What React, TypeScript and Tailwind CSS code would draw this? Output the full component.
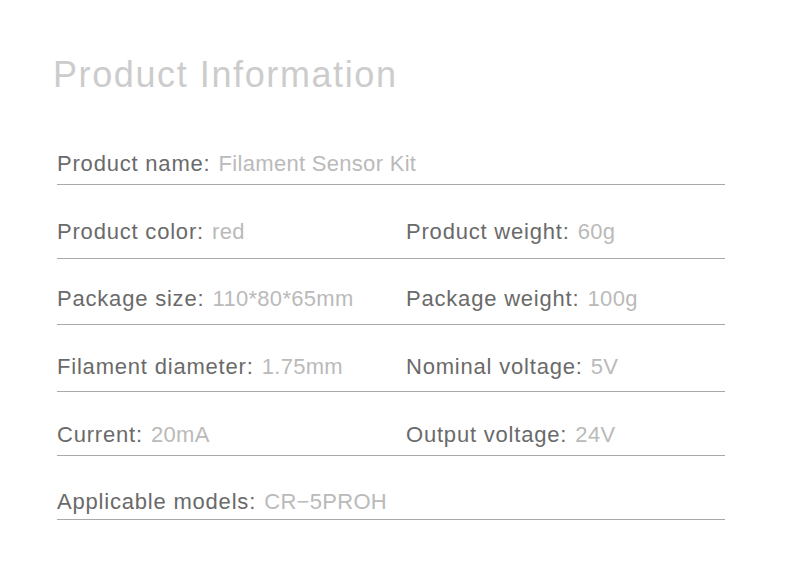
const rows: { pad: string; cells: [string, string][] }[] = [
  { pad: "pt-[59px] pb-[8px]", cells: [["Product name:", "Filament Sensor Kit"]] },
  {
    pad: "pt-[35px] pb-[14px]",
    cells: [
      ["Product color:", "red"],
      ["Product weight:", "60g"],
    ],
  },
  {
    pad: "pt-[28px] pb-[13px]",
    cells: [
      ["Package size:", "110*80*65mm"],
      ["Package weight:", "100g"],
    ],
  },
  {
    pad: "pt-[30px] pb-[12px]",
    cells: [
      ["Filament diameter:", "1.75mm"],
      ["Nominal voltage:", "5V"],
    ],
  },
  {
    pad: "pt-[31px] pb-[8px]",
    cells: [
      ["Current:", "20mA"],
      ["Output voltage:", "24V"],
    ],
  },
  { pad: "pt-[34px] pb-[5px]", cells: [["Applicable models:", "CR−5PROH"]] },
];

function Cell({ label, value }: { label: string; value: string }) {
  return (
    <div className="whitespace-nowrap text-[22px] leading-[24px]">
      <span className="tracking-[0.8px] text-[#6a6a6a]">{label}</span>{" "}
      <span className="ml-[2px] tracking-[0.3px] text-[#bababa]">{value}</span>
    </div>
  );
}

export default function App() {
  return (
    <div
      className="min-h-[588px] w-[790px] bg-white pl-[53px] pt-[57px]"
      style={{ fontFamily: '"Liberation Sans", Arial, sans-serif' }}
    >
      <h1 className="text-[36px] leading-[36px] tracking-[1.6px] text-[#cccccc]">
        Product Information
      </h1>
      <div className="ml-[4px] w-[668px]">
        {rows.map((row, i) => (
          <div
            key={i}
            className={`grid grid-cols-[349px_1fr] border-b border-[#a9a9a9] ${row.pad}`}
          >
            {row.cells.map(([label, value]) => (
              <Cell key={label} label={label} value={value} />
            ))}
          </div>
        ))}
      </div>
    </div>
  );
}
